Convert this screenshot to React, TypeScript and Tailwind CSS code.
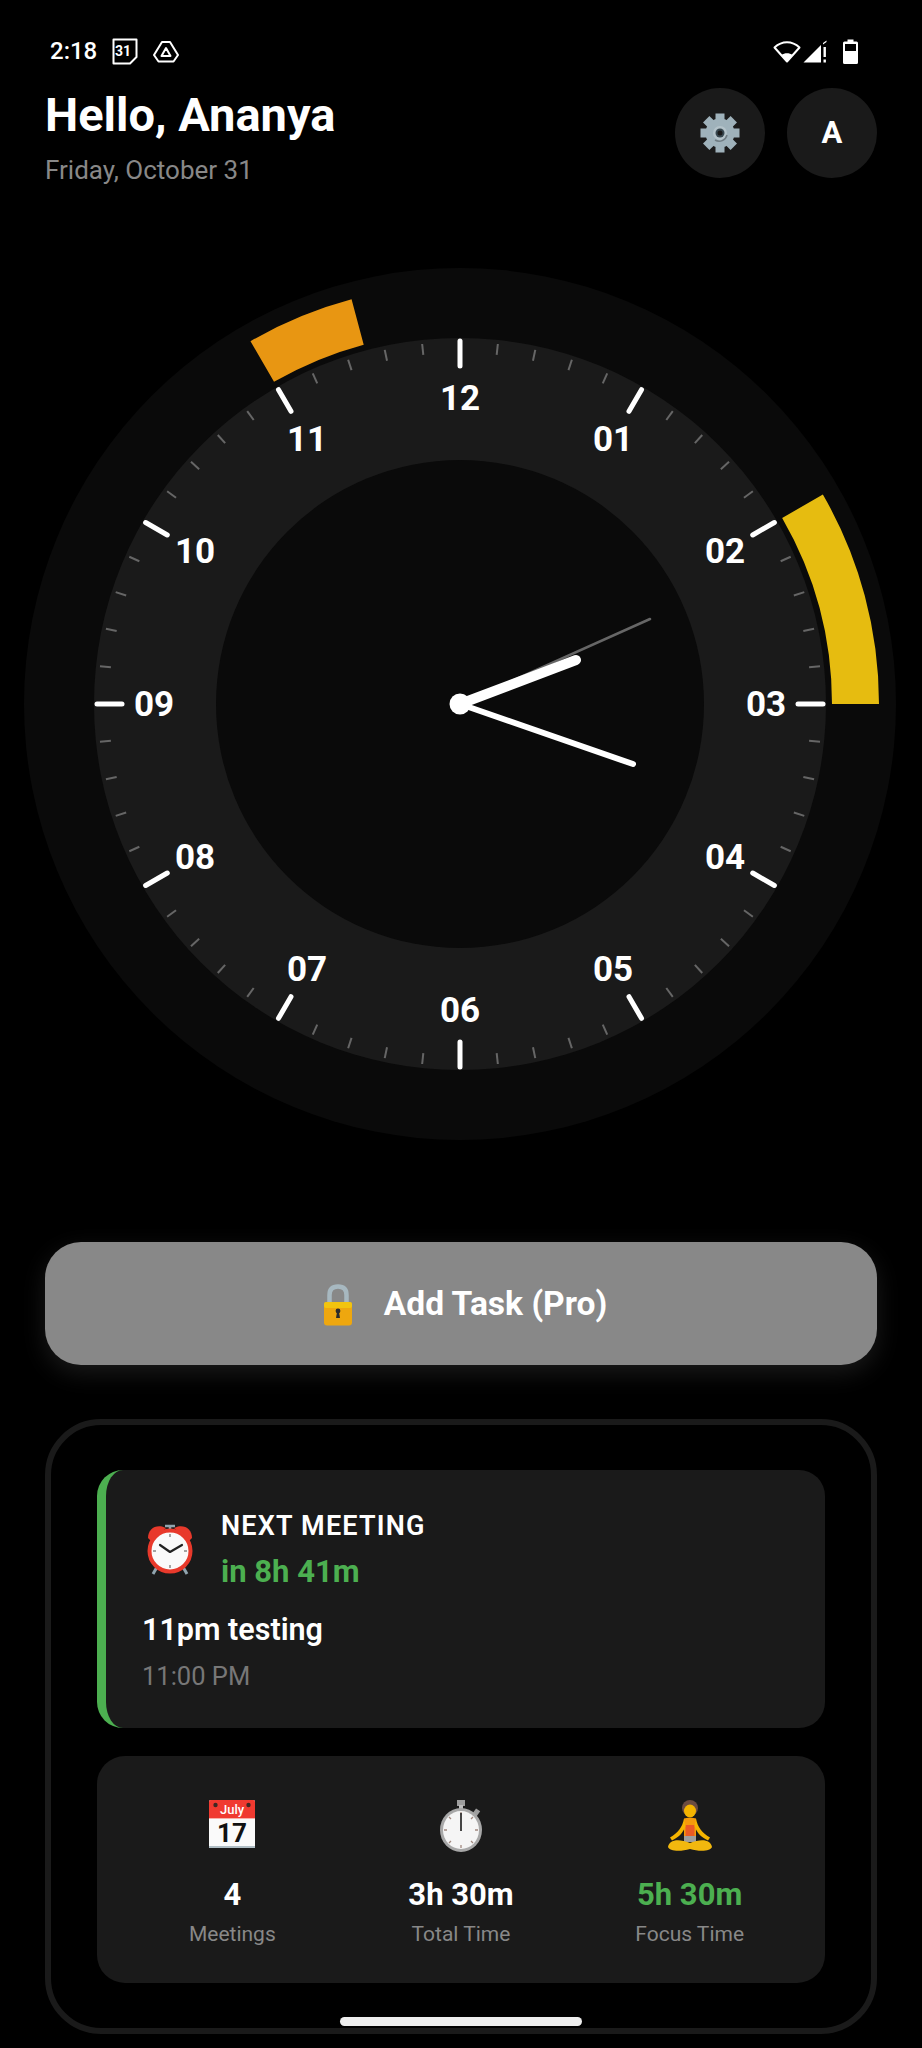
import React from 'react';

const CX = 436;
const CY = 436;

function polar(r: number, deg: number) {
  const a = ((deg - 90) * Math.PI) / 180;
  return { x: CX + r * Math.cos(a), y: CY + r * Math.sin(a) };
}

function arcPath(r1: number, r2: number, from: number, to: number) {
  const a = polar(r2, from);
  const b = polar(r2, to);
  const c = polar(r1, to);
  const d = polar(r1, from);
  return `M${a.x} ${a.y} A${r2} ${r2} 0 0 1 ${b.x} ${b.y} L${c.x} ${c.y} A${r1} ${r1} 0 0 0 ${d.x} ${d.y} Z`;
}

const hourLabels = ['12', '01', '02', '03', '04', '05', '06', '07', '08', '09', '10', '11'];

function ClockFace() {
  const ticks = Array.from({ length: 60 }, (_, i) => i);
  return (
    <svg width="872" height="872" viewBox="0 0 872 872">
      <circle cx={CX} cy={CY} r="436" fill="#0a0a0a" />
      <circle cx={CX} cy={CY} r="366" fill="#1a1a1a" />
      <circle cx={CX} cy={CY} r="244" fill="#0a0a0a" />
      <path d={arcPath(372, 419, 60, 90)} fill="#e6bc10" />
      <path d={arcPath(372, 419, -30, -15)} fill="#e89612" />
      {ticks.map((i) => {
        const deg = i * 6;
        const major = i % 5 === 0;
        const p1 = polar(major ? 363 : 362, deg);
        const p2 = polar(major ? 338 : 351, deg);
        return (
          <line
            key={i}
            x1={p1.x}
            y1={p1.y}
            x2={p2.x}
            y2={p2.y}
            stroke={major ? '#ffffff' : '#666666'}
            strokeWidth={major ? 5 : 2}
            strokeLinecap={major ? 'round' : 'butt'}
          />
        );
      })}
      {hourLabels.map((label, i) => {
        const p = polar(306, i * 30);
        return (
          <text
            key={label}
            x={p.x}
            y={p.y + 12}
            textAnchor="middle"
            fill="#ffffff"
            fontSize="35"
            fontWeight="700"
            fontFamily="Roboto, sans-serif"
          >
            {label}
          </text>
        );
      })}
      <line x1={CX} y1={CY} x2={CX + 190} y2={CY - 85} stroke="#666666" strokeWidth="2.5" strokeLinecap="round" />
      <line x1={CX} y1={CY} x2={CX + 116} y2={CY - 44} stroke="#ffffff" strokeWidth="10" strokeLinecap="round" />
      <line x1={CX} y1={CY} x2={CX + 173} y2={CY + 60} stroke="#ffffff" strokeWidth="6" strokeLinecap="round" />
      <circle cx={CX} cy={CY} r="10.5" fill="#ffffff" />
    </svg>
  );
}

function StatusBar() {
  return (
    <div className="h-[88px] pl-[50px] pr-[64px] pt-[38px] flex justify-between items-start text-white">
      <div className="flex items-center h-[26px]">
        <span className="text-[24px] font-medium leading-none w-[62px]">2:18</span>
        <svg width="26" height="27" viewBox="0 0 26 27" fill="none" stroke="#fff" strokeWidth="2">
          <path d="M1.5 1.5H24.5V19L18 25.5H1.5Z" strokeLinejoin="round" />
          <text x="11" y="18" textAnchor="middle" fill="#fff" stroke="none" fontSize="14" fontWeight="700" fontFamily="Roboto, sans-serif">31</text>
        </svg>
        <svg className="ml-[15px]" width="26" height="23" viewBox="0 0 26 23" fill="none" stroke="#fff" strokeWidth="2" strokeLinejoin="round">
          <path d="M9 2H17L25 15L20.5 21.5H5.5L1 15Z" />
          <path d="M13 8L17.5 16H8.5Z" />
        </svg>
      </div>
      <div className="flex items-center h-[26px]">
        <svg width="28" height="23" viewBox="0 0 28 23" fill="none">
          <path d="M1.5 7.5C9 0.5 19 0.5 26.5 7.5L14 21.5Z" stroke="#fff" strokeWidth="2" strokeLinejoin="round" />
          <path d="M8.5 15C11.5 12.8 16.5 12.8 19.5 15L14 21.5Z" fill="#fff" />
        </svg>
        <svg className="ml-[2px]" width="25" height="23" viewBox="0 0 25 23">
          <path d="M0.5 22.5L18 5V22.5Z" fill="#fff" />
          <path d="M20 3L23.5 0.5V2L20 4.5Z" fill="#fff" />
          <rect x="20.5" y="7" width="2.4" height="10" fill="#fff" />
          <rect x="20.5" y="19.5" width="2.4" height="3" fill="#fff" />
        </svg>
        <svg className="ml-[15px]" width="15" height="25" viewBox="0 0 15 25">
          <path d="M4.5 0.5H10.5V2.5H13.5Q15 2.5 15 4V23.5Q15 25 13.5 25H1.5Q0 25 0 23.5V4Q0 2.5 1.5 2.5H4.5Z" fill="#fff" />
          <rect x="2" y="5" width="11" height="7" fill="#000" />
        </svg>
      </div>
    </div>
  );
}

function GearEmoji() {
  const teeth = Array.from({ length: 8 }, (_, i) => i * 45);
  return (
    <svg width="40" height="40" viewBox="0 0 40 40">
      {teeth.map((t) => (
        <rect key={t} x="15.5" y="0.5" width="9" height="10" fill="#9fb2bb" transform={`rotate(${t} 20 20)`} />
      ))}
      <circle cx="20" cy="20" r="14.5" fill="#9fb2bb" />
      <circle cx="20" cy="20" r="7" fill="#b4c3ca" />
      <path d="M27 22A8 8 0 0 1 15 27" stroke="#6f7c83" strokeWidth="1.5" fill="none" />
      <circle cx="20" cy="20" r="4.5" fill="#37474f" />
      <circle cx="20" cy="20" r="2.5" fill="#1a1a1a" />
    </svg>
  );
}

function LockEmoji() {
  return (
    <svg width="30" height="42" viewBox="0 0 30 42">
      <path d="M6.5 20V11C6.5 5 10 2.5 15 2.5S23.5 5 23.5 11V20" fill="none" stroke="#a7b8c0" strokeWidth="4.5" />
      <rect x="1" y="18" width="28" height="23.5" rx="3" fill="#eea70f" />
      <rect x="1" y="18" width="28" height="6" rx="2" fill="#f2c40f" />
      <circle cx="15" cy="27" r="2.4" fill="#2b2b2b" />
      <path d="M14 28H16L17 34H13Z" fill="#2b2b2b" />
    </svg>
  );
}

function AlarmEmoji() {
  return (
    <svg width="46" height="52" viewBox="0 0 46 52">
      <path d="M10 44L6 51M36 44L40 51" stroke="#90a4ae" strokeWidth="3" />
      <path d="M23 3V8M18 3H28" stroke="#90a4ae" strokeWidth="2.5" />
      <path d="M1 15C1 7 7 2 15 3.5L19 5L4 18Z" fill="#e8392b" />
      <path d="M45 15C45 7 39 2 31 3.5L27 5L42 18Z" fill="#e8392b" />
      <circle cx="23" cy="28" r="20.5" fill="#fafafa" stroke="#e8392b" strokeWidth="4" />
      <path d="M23 11V14M23 42V45M6 28H9M37 28H40" stroke="#888" strokeWidth="1.5" />
      <path d="M13 22L23 29L35 22" fill="none" stroke="#222" strokeWidth="2.2" strokeLinecap="round" strokeLinejoin="round" />
    </svg>
  );
}

function CalendarEmoji() {
  return (
    <svg width="46" height="48" viewBox="0 0 46 48">
      <rect x="0" y="0" width="46" height="48" rx="1.5" fill="#fafafa" />
      <path d="M0 1.5Q0 0 1.5 0H44.5Q46 0 46 1.5V18H0Z" fill="#f03a30" />
      <rect x="0" y="18" width="46" height="1" fill="#f8b0a8" />
      <rect x="0" y="46" width="46" height="2" fill="#b0bec5" />
      <circle cx="6.5" cy="5" r="2.2" fill="#3e2723" />
      <circle cx="39.5" cy="5" r="2.2" fill="#3e2723" />
      <text x="23" y="14" textAnchor="middle" fontSize="13" fontWeight="500" fill="#fff" fontFamily="Roboto, sans-serif">July</text>
      <text x="23" y="42" textAnchor="middle" fontSize="26" fontWeight="700" fill="#111" fontFamily="Roboto, sans-serif">17</text>
    </svg>
  );
}

function StopwatchEmoji() {
  return (
    <svg width="46" height="52" viewBox="0 0 46 52">
      <rect x="19" y="0" width="8" height="6" fill="#9e9e9e" />
      <rect x="21" y="5" width="4" height="4" fill="#bdbdbd" />
      <rect x="36" y="9" width="5" height="6" fill="#9e9e9e" transform="rotate(35 38 12)" />
      <ellipse cx="23" cy="30" rx="21" ry="22" fill="#a8a8a8" />
      <ellipse cx="23" cy="30" rx="18" ry="19" fill="#f5f5f5" />
      <path d="M23 12V15M23 45V48M6 30H9M37 30H40M11 17L13 19M33 41L35 43M35 17L33 19M13 41L11 43" stroke="#a1887f" strokeWidth="1.3" />
      <path d="M23 13V31" stroke="#333" strokeWidth="1.8" />
    </svg>
  );
}

function LotusEmoji() {
  return (
    <svg width="46" height="52" viewBox="0 0 46 52">
      <ellipse cx="23" cy="8" rx="8" ry="8" fill="#6d4c41" />
      <ellipse cx="23" cy="11" rx="6" ry="6.5" fill="#f5b400" />
      <path d="M17 18.5C19 17.5 27 17.5 29 18.5L29 38H17Z" fill="#f59a0c" />
      <path d="M18.5 25H27.5V36H18.5Z" fill="#ea5a25" />
      <path d="M17 18.5C15.5 27 11 33 3 37.5L5 40.5C12.5 37 16.5 32 18.5 26Z" fill="#f5b400" />
      <path d="M29 18.5C30.5 27 35 33 43 37.5L41 40.5C33.5 37 29.5 32 27.5 26Z" fill="#f5b400" />
      <path d="M17 36H29V42H17Z" fill="#9e9e9e" />
      <path d="M1 47C2 40 11 38 23 43C35 38 44 40 45 47C44 51 33 52 23 49C13 52 2 51 1 47Z" fill="#f2b80e" />
    </svg>
  );
}

function Stat({ icon, value, label, green }: { icon: React.ReactNode; value: string; label: string; green?: boolean }) {
  return (
    <div className="flex flex-col items-center">
      <div className="h-[52px] flex items-start justify-center">{icon}</div>
      <div className={`mt-[25px] text-[31px] leading-[36px] font-bold ${green ? 'text-[#4caf50]' : 'text-white'}`}>{value}</div>
      <div className="mt-[7px] text-[21px] leading-[28px] text-[#888888]">{label}</div>
    </div>
  );
}

export default function App() {
  return (
    <div className="relative w-[922px] h-[2048px] overflow-hidden bg-black font-['Roboto',sans-serif]">
      <StatusBar />

      {/* Greeting */}
      <div className="px-[45px] flex justify-between items-start h-[90px]">
        <div>
          <h1 className="text-[47px] leading-[54px] font-bold text-white">Hello, Ananya</h1>
          <p className="mt-[13px] text-[26px] leading-[30px] text-[#888888]">Friday, October 31</p>
        </div>
        <div className="flex gap-[22px]">
          <button className="w-[90px] h-[90px] rounded-full bg-[#1a1a1a] flex items-center justify-center">
            <GearEmoji />
          </button>
          <button className="w-[90px] h-[90px] rounded-full bg-[#1a1a1a] flex items-center justify-center text-white text-[31px] font-bold">
            A
          </button>
        </div>
      </div>

      {/* Clock */}
      <div className="mt-[90px] pr-[2px] flex justify-center">
        <ClockFace />
      </div>

      {/* Add task */}
      <div className="px-[45px] mt-[102px]">
        <button className="w-full h-[123px] pl-[8px] pt-[2px] rounded-[36px] bg-[#888888] flex items-center justify-center gap-[31px] text-white text-[33.6px] font-bold shadow-[0_8px_24px_rgba(255,255,255,0.1)]">
          <LockEmoji />
          <span>Add Task (Pro)</span>
        </button>
      </div>

      {/* Summary */}
      <div className="mx-[45px] mt-[54px] h-[615px] rounded-[56px] border-[6px] border-[#1a1a1a] pt-[45px] px-[46px]">
        <div className="h-[258px] rounded-[26px] bg-[#1a1a1a] border-l-[9px] border-[#4caf50] pl-[36px] pr-[40px] pt-[40px]">
          <div className="flex items-start">
            <div className="pt-[13px] ml-[5px]">
              <AlarmEmoji />
            </div>
            <div className="ml-[28px]">
              <div className="text-[27px] leading-[32px] font-semibold tracking-[1.2px] text-white">NEXT MEETING</div>
              <div className="mt-[11px] text-[31px] leading-[38px] font-bold text-[#4caf50]">in 8h 41m</div>
            </div>
          </div>
          <div className="mt-[21px] text-[30.5px] leading-[36px] font-semibold text-white">11pm testing</div>
          <div className="mt-[12px] text-[25.5px] leading-[32px] text-[#777777]">11:00 PM</div>
        </div>
        <div className="mt-[28px] h-[227px] rounded-[28px] bg-[#1a1a1a] pt-[44px] grid grid-cols-3 px-[21px]">
          <Stat icon={<CalendarEmoji />} value="4" label="Meetings" />
          <Stat icon={<StopwatchEmoji />} value="3h 30m" label="Total Time" />
          <Stat icon={<LotusEmoji />} value="5h 30m" label="Focus Time" green />
        </div>
      </div>

      {/* Home indicator */}
      <div className="absolute left-[340px] top-[2017px] w-[242px] h-[9px] rounded-full bg-[#eeeeee]" />
    </div>
  );
}
